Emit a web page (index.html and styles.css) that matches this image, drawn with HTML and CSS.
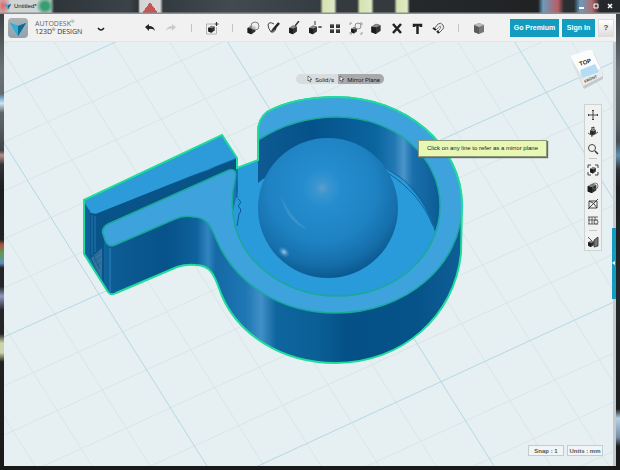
FILE: index.html
```
<!DOCTYPE html>
<html lang="en">
<head>
  <meta charset="UTF-8" />
  <meta name="viewport" content="width=device-width, initial-scale=1.0" />
  <title>Untitled*</title>
  <link rel="stylesheet" href="styles.css">
</head>
<body>
  <!-- shared icon shapes -->
  <svg class="defs" aria-hidden="true">
    <symbol id="cube" viewBox="0 0 14 14">
      <path d="M2 5l5-3 5 1.5v6L7 13l-5-2z" fill="#333"/>
      <path d="M2 5l5-3 5 1.5-5 2.5z" fill="#888"/>
      <path d="M2 5l5 1v7l-5-2z" fill="#1c1c1c"/>
    </symbol>
    <symbol id="cursor" viewBox="0 0 6 8">
      <path d="M1 1v5l1-1 1 2 1-.5-1-2h2z" fill="#fff" stroke="#333" stroke-width=".6"/>
    </symbol>
    <symbol id="logo" viewBox="0 0 20 20">
      <path d="M2 5l8 3 8-3-8 13z" fill="#1688b4"/>
      <path d="M2 5l8 3v10z" fill="#2fb2da"/>
      <path d="M10 8l8-3-8 13z" fill="#0c6c96"/>
    </symbol>
  </svg>

  <header class="titlebar">
    <svg class="title-logo"><use href="#logo"/></svg>
    <span class="title">Untitled*</span>
    <div class="window-buttons">
      <button aria-label="Minimize"><svg viewBox="0 0 8 8"><path d="M1 6h5" stroke="#fff" stroke-width="2"/></svg></button>
      <button aria-label="Maximize"><svg viewBox="0 0 8 8"><path d="M2 2h4v4H2z" fill="none" stroke="#fff" stroke-width="1"/></svg></button>
      <button aria-label="Close"><svg viewBox="0 0 8 8"><path d="M2 2l4 4M6 2L2 6" stroke="#fff" stroke-width="1.5"/></svg></button>
    </div>
  </header>

  <div class="window">
    <nav class="toolbar">
      <div class="brand">
        <svg class="brand-logo"><use href="#logo"/></svg>
        <div class="brand-name"><span>AUTODESK<sup>®</sup></span><strong>123D<sup>®</sup> DESIGN</strong></div>
        <button class="tool brand-menu" aria-label="Menu"><svg viewBox="0 0 14 14"><path d="M4 7q3 4 6 0" fill="none" stroke="#222" stroke-width="1.5"/></svg></button>
      </div>
      <div class="tools">
        <button class="tool" aria-label="Undo"><svg viewBox="0 0 14 14"><path d="M2 6l4-3v2q5 0 6 5-2-3-6-2v2z" fill="#222"/></svg></button>
        <button class="tool" aria-label="Redo"><svg viewBox="0 0 14 14"><path d="M12 6l-4-3v2q-5 0-6 5 2-3 6-2v2z" fill="#ccc"/></svg></button>
        <span class="sep"></span>
        <button class="tool" aria-label="Insert"><svg viewBox="0 0 14 14"><path d="M9 3H1.5v10h10V6" fill="none" stroke="#999" stroke-width=".7"/><use href="#cube" x="2" y="3.5" width="9" height="9"/><path d="M11.500 1v4M9.500 3h4" stroke="#333"/></svg></button>
        <span class="sep"></span>
        <button class="tool" aria-label="Primitives"><svg viewBox="0 0 14 14"><use href="#cube" x="0" y="3" width="11" height="11"/><circle cx="9" cy="5" r="4" fill="#eee" fill-opacity=".7" stroke="#666" stroke-width=".8"/></svg></button>
        <button class="tool" aria-label="Sketch"><svg viewBox="0 0 14 14"><path d="M8 3Q3 0 2 4q0 3 3 7 4 1 5-4" fill="none" stroke="#444"/><path d="M13 2L7 9" stroke="#222" stroke-width="2.5"/><path d="M5 11l1-3 2 2z" fill="#222"/></svg></button>
        <button class="tool" aria-label="Construct"><svg viewBox="0 0 14 14"><use href="#cube" x="0" y="3" width="12" height="11"/><path d="M8 5l4-5" stroke="#333" stroke-width="1.5"/></svg></button>
        <button class="tool" aria-label="Modify"><svg viewBox="0 0 14 14"><use href="#cube" x="-1" y="3" width="12" height="11"/><path d="M7 0v4M10 6h4M12 5v2" stroke="#333"/></svg></button>
        <button class="tool" aria-label="Pattern"><svg viewBox="0 0 14 14"><path d="M2 3h4v4H2zM8 3h4v4H8zM2 8h4v4H2zM8 8h4v4H8z" fill="#333"/><path d="M2 3l2 1 2-1M8 3l2 1 2-1M2 8l2 1 2-1M8 8l2 1 2-1" fill="none" stroke="#bbb" stroke-width=".7"/></svg></button>
        <button class="tool" aria-label="Grouping"><svg viewBox="0 0 14 14"><path d="M1 4V2h2M11 2h2v2M13 11v2h-2M3 13H1v-2" fill="none" stroke="#888" stroke-width=".8"/><use href="#cube" x="1" y="5" width="8" height="8"/><circle cx="9" cy="5" r="3" fill="#eee" stroke="#777" stroke-width=".8"/></svg></button>
        <button class="tool" aria-label="Combine"><svg viewBox="0 0 14 14"><use href="#cube" x="0" y="1" width="14" height="13"/></svg></button>
        <button class="tool" aria-label="Delete"><svg viewBox="0 0 14 14"><path d="M3 3l8 9M11 3l-8 9" stroke="#222" stroke-width="2.5"/></svg></button>
        <button class="tool" aria-label="Text"><svg viewBox="0 0 14 14"><path d="M4 6V4h7v2M7.500 4v9" fill="none" stroke="#222" stroke-width="2.5"/></svg></button>
        <button class="tool" aria-label="Snap"><svg viewBox="0 0 14 14"><path d="M3 8l4-5q3-2 5 1t-1 5l-3 3" fill="none" stroke="#666"/><path d="M5 9l4-4q2 0 0 3l-3 3" fill="none" stroke="#888"/><path d="M2 7l3 2M6 10l2 2" stroke="#222" stroke-width="2"/></svg></button>
        <span class="sep"></span>
        <button class="tool" aria-label="Material"><svg viewBox="0 0 14 14"><path d="M2 4l5-2 5 2v7l-5 2-5-2z" fill="#777"/><path d="M2 4l5 2v7l-5-2z" fill="#5b5b5b"/><path d="M2 4l5-2 5 2-5 2z" fill="#bbb"/></svg></button>
      </div>
      <div class="account">
        <button class="btn premium">Go Premium</button>
        <button class="btn signin">Sign In</button>
        <button class="btn help">?</button>
      </div>
    </nav>

    <main class="viewport">
      <svg class="scene" viewBox="4 42 612 424" preserveAspectRatio="xMidYMid slice" role="img" aria-label="Whistle model">
        <defs>
          <linearGradient id="side" gradientUnits="userSpaceOnUse" x1="83" y1="0" x2="462" y2="0">
            <stop offset="0" stop-color="#1a78b4"/>
            <stop offset=".08" stop-color="#0d5c93"/>
            <stop offset=".22" stop-color="#07528a"/>
            <stop offset=".3" stop-color="#0e629c"/>
            <stop offset=".33" stop-color="#3186c2"/>
            <stop offset=".35" stop-color="#1569a5"/>
            <stop offset=".43" stop-color="#1e77b3"/>
            <stop offset=".47" stop-color="#418fc8"/>
            <stop offset=".51" stop-color="#0f659e"/>
            <stop offset=".62" stop-color="#0a5f96"/>
            <stop offset=".7" stop-color="#045087"/>
            <stop offset=".88" stop-color="#065389"/>
            <stop offset="1" stop-color="#0e5f97"/>
          </linearGradient>
          <linearGradient id="wall" gradientUnits="userSpaceOnUse" x1="258" y1="0" x2="440" y2="0">
            <stop offset="0" stop-color="#0e5a92"/>
            <stop offset=".3" stop-color="#05528a"/>
            <stop offset=".65" stop-color="#0b659f"/>
            <stop offset=".75" stop-color="#2278b3"/>
            <stop offset=".8" stop-color="#4a94c9"/>
            <stop offset=".85" stop-color="#1970ac"/>
            <stop offset="1" stop-color="#0b5b95"/>
          </linearGradient>
          <radialGradient id="ball" gradientUnits="userSpaceOnUse" cx="322" cy="188" r="96">
            <stop offset="0" stop-color="#5a9fc9"/>
            <stop offset=".07" stop-color="#3a95d0"/>
            <stop offset=".2" stop-color="#258dce"/>
            <stop offset=".55" stop-color="#1f83c3"/>
            <stop offset=".8" stop-color="#156eaa"/>
            <stop offset="1" stop-color="#075084"/>
          </radialGradient>
          <radialGradient id="spark">
            <stop offset="0" stop-color="#a5d0ec"/>
            <stop offset="1" stop-color="#2c86c1" stop-opacity="0"/>
          </radialGradient>
        </defs>

        <!-- work plane grid -->
        <path class="grid" d="M-232 41l267 425M-175 41l267 425M-117 41l267 425M-3 41l267 425M54 41l267 425M112 41l267 425M169 41l267 425M284 41l267 425M342 41l267 425M399 41l267 425M457 41l267 425M571 41l267 425"/>
        <path class="grid" d="M4 44l612-280M4 142l612-280M4 191l612-280M4 239l612-280M4 288l612-280M4 386l612-280M4 435l612-280M4 484l612-280M4 533l612-280M4 632l612-280M4 681l612-280M4 730l612-280"/>
        <path class="grid major" d="M-60 41l267 425M227 41l267 425M514 41l267 425M4 93l612-280M4 337l612-276M4 583l612-282"/>

        <!-- whole body -->
        <path fill="url(#side)" d="M84 200L222 135 237 158 237 168 258 160V132Q258 119 267 112Q294 97 336 97C406 97 462 146 462 205L461 253C455 316 402 363 336 363C280 363 238 333 222 296C216 282 214 265 196 265Q186 264 177 267L116 293Q111 296 108 292L84 254Z"/>

        <!-- back rail -->
        <path d="M84 201L222 136 236 158 98 213Q93 215 89 211Z" fill="#2d9ad9"/>
        <path d="M236 159V170L104 226V282L90 258V213L96 214Z" fill="#085489"/>
        <path d="M84 203l6 8v48l-6-7z" fill="#0f6098"/>
        <path d="M92 215v40M95 216v36" stroke="#2f84bf" stroke-width=".7"/>
        <path d="M91 258l3-3 8-7v32z" fill="#2f739f"/>
        <path d="M94 257l6-5M94 262l7-6M97 266l4-4M93 255l7 14" stroke="#164f76" stroke-width=".6"/>

        <!-- chamber floor and inner wall -->
        <path d="M237 169L258 160 300 150 420 160Q445 200 439 225C430 268 389 296 337 296C280 296 237 257 232 215L238 190Z" fill="#299ada"/>
        <path d="M258 141C280 126 306 117 337 117C396 117 441 156 440 206Q440 220 435 231C426 203 410 184 388 170L330 150 263 179 258 183Z" fill="url(#wall)"/>
        <path d="M388 170C410 181 430 203 435 231M388 173C408 186 424 203 433 226" fill="none" stroke="#10649b" stroke-width="1"/>
        <path d="M237 168V198M238 199q5 3 0 7 5 4 1 8l-2 12" fill="none" stroke="#095a90" stroke-width="1"/>

        <!-- ball -->
        <circle cx="328" cy="208" r="70" fill="url(#ball)"/>
        <path d="M281 196Q286 222 308 230Q290 217 281 196Z" fill="#4c9dd0" opacity=".5"/>
        <ellipse cx="284" cy="252" rx="7" ry="5" fill="url(#spark)" transform="rotate(40 284 252)"/>

        <!-- top face -->
        <path class="edge" fill="#3ea2dc" d="M103 234Q101 228 108 224L229 170Q238 168 235 180C232 192 232 205 233 215C238 260 283 296 337 296C395 296 440 256 440 206C440 156 394 117 337 117C306 117 280 126 258 140V132Q258 119 267 112Q294 97 336 97C406 97 462 146 462 205C462 265 406 313 336 313C280 313 236 284 217 241C211 227 208 217 193 217Q184 215 175 219L115 245Q108 248 105 240Z"/>
        <path d="M110 248v44" stroke="#2c84bd" stroke-width="1"/>

        <!-- selection outline -->
        <path class="outline" d="M84 200L222 135 237 158 237 168 258 160V132Q258 119 267 112Q294 97 336 97C406 97 462 146 462 205L461 253C455 316 402 363 336 363C280 363 238 333 222 296C216 282 214 265 196 265Q186 264 177 267L116 293Q111 296 108 292L84 254Z"/>
      </svg>

      <div class="steps">
        <button class="step"><svg><use href="#cursor"/></svg>Solid/s</button>
        <button class="step active"><svg><use href="#cursor"/></svg>Mirror Plane</button>
      </div>

      <div class="tooltip" role="tooltip">Click on any line to refer as a mirror plane</div>

      <svg class="viewcube" viewBox="0 0 36 44" role="img" aria-label="View cube">
        <path d="M4 14l12 28 19-10V26L26 6z" fill="#b4babc" opacity=".7"/>
        <path d="M3 11Q2 9 5 8L20 3q4-1 5 2l8 17-21 7z" fill="#fbfcfc"/>
        <path d="M12 28l22-6 1 7-20 10z" fill="#e9eced"/>
        <path d="M3 11l10 17 2 11L5 19z" fill="#dde1e2"/>
        <path d="M12 23l15-6 4 8-17 6z" fill="#b5dcf5"/>
        <text x="12" y="19" font-size="6" font-weight="700" fill="#222" transform="rotate(-18 12 19)">TOP</text>
        <text x="17" y="36" font-size="4" font-weight="700" fill="#555" transform="rotate(-24 17 36)">FRONT</text>
      </svg>

      <aside class="navbar">
        <button aria-label="Pan"><svg viewBox="0 0 12 12"><path d="M6 1v10M1 6h10M5 2l1-1 1 1M5 10l1 1 1-1M2 5L1 6l1 1M10 5l1 1-1 1" fill="none" stroke="#333" stroke-width=".9"/></svg></button>
        <button aria-label="Orbit"><svg viewBox="0 0 12 12"><use href="#cube" x="2" y="2" width="8" height="8"/><path d="M7 1Q2 3 5 11M1 7q4 4 10-1M4 2l3-1v3" fill="none" stroke="#444" stroke-width=".9"/></svg></button>
        <button aria-label="Zoom"><svg viewBox="0 0 12 12"><circle cx="5" cy="5" r="3.5" fill="none" stroke="#444"/><path d="M8 8l3 3" stroke="#333" stroke-width="1.5"/></svg></button>
        <hr>
        <button aria-label="Fit"><svg viewBox="0 0 12 12"><path d="M1 4V1h3M8 1h3v3M11 8v3H8M4 11H1V8" fill="none" stroke="#444"/><use href="#cube" x="2" y="2" width="8" height="8"/></svg></button>
        <button aria-label="Display mode"><svg viewBox="0 0 12 12"><use href="#cube" x="-1" y="1" width="12" height="12"/><circle cx="8" cy="5" r="3" fill="none" stroke="#666" stroke-width=".8"/></svg></button>
        <button aria-label="Hide sketches"><svg viewBox="0 0 12 12"><path d="M2 3h8v7H2zM1 11L11 1M2 3q5 1 8 7" fill="none" stroke="#333" stroke-width=".9"/></svg></button>
        <button aria-label="Grid"><svg viewBox="0 0 12 12"><path d="M1 2h10M1 5h10M1 9h10M2 2v7M5 2v7M8 2v7" fill="none" stroke="#444" stroke-width=".8"/><circle cx="9" cy="7" r="2" fill="#eee" stroke="#444" stroke-width=".8"/></svg></button>
        <hr>
        <button aria-label="Snap"><svg viewBox="0 0 12 12"><use href="#cube" x="0" y="3" width="8" height="9"/><path d="M1 1l4 4M7 4l4-3v9L7 11z" fill="#777" stroke="#333" stroke-width=".8"/></svg></button>
      </aside>

      <div class="scrollbar"></div>
      <button class="panel-tab" aria-label="Open parts library"></button>

      <footer class="status">
        <button>Snap : 1</button>
        <button>Units : mm</button>
      </footer>
    </main>
  </div>
</body>
</html>
```
FILE: styles.css
```
* {
  box-sizing: border-box;
}
body {
  margin: 0;
  height: 100vh;
  padding: 0 4px 4px;
  display: flex;
  flex-direction: column;
  overflow: hidden;
  font-family: "Liberation Sans", Arial, sans-serif;
  background:
    linear-gradient(transparent 20%, #7fb2d6 21%, #cfe4f0 22%, transparent 24%, transparent 32%, #b98d86 33%, transparent 35%, transparent 51%, #a5533f 52%, #5f9a5c 54%, #5b8fc0 56%, transparent 57%, transparent 61%, #8f9ac0 63%, transparent 66%, transparent 71%, #cbd6a8 73%, #cbd6a8 75%, transparent 77%) left / 4px 100% no-repeat,
    linear-gradient(transparent 30%, #5f8fb0 33%, transparent 36%, transparent 87%, #b9cfe2 89%, #7790a8 93%, transparent 95%) right / 4px 100% no-repeat,
    linear-gradient(#30363a, #6b7276 15%, #5a6165 26%, #1c1e20 40%, #25282a 62%, #222 75%, #191919);
}
button {
  margin: 0;
  padding: 0;
  border: none;
  background: none;
  font-family: inherit;
  white-space: nowrap;
}
.defs {
  position: absolute;
  width: 0;
  height: 0;
}

/* title bar */
.titlebar {
  display: flex;
  align-items: center;
  flex: none;
  height: 14px;
  margin: 0 -4px;
  padding: 0 6px 2px 4px;
  background:
    linear-gradient(transparent 12px, #8b9194 13px),
    radial-gradient(ellipse 8px 12px at 3px 6px, #d66, transparent),
    radial-gradient(ellipse 9px 9px at 45px 6px, #3a9c72 40%, transparent),
    conic-gradient(from 145deg at 50% 0, #c25757 70deg, transparent 0) 142px 2px / 16px 11px no-repeat,
    linear-gradient(90deg, #cfd4d4 50px, #2f3539 54px, #3b4349 130px, #2d3337 138px, #d5d5d5 140px, #d8d8d8 160px, #343b40 163px, #434b50 230px, #353c42 320px, #d6e3b0 323px, #dfe8c5 334px, #343a3e 337px, #343a3e 357px, #d6e3b0 360px, #dfe8c5 371px, #343a3e 374px, #343a3e 394px, #d6e3b0 397px, #dfe8c5 407px, #26292c 410px, #202224 538px, #6a9cbc 543px, #b95d62 558px, #2b2e31 564px, #2b2e31 574px, #6a9cbc 580px, #b06a70 592px, #25282a 600px);
}
.title-logo {
  width: 8px;
  height: 8px;
}
.title {
  margin-left: 2px;
  font-size: 6px;
  color: #111;
}
.window-buttons {
  display: flex;
  gap: 6px;
  margin-left: auto;
}
.window-buttons button,
.window-buttons svg {
  display: block;
  width: 8px;
  height: 8px;
}

.window {
  flex: 1;
  display: flex;
  flex-direction: column;
  min-height: 0;
}

/* toolbar */
.toolbar {
  display: flex;
  align-items: center;
  flex: none;
  height: 28px;
  padding: 0 2px 0 4px;
  background: #f1f1f1;
  border-bottom: 1px solid #e2e6e6;
}
.brand {
  display: flex;
  align-items: center;
  width: 132px;
}
.brand-logo {
  width: 20px;
  height: 20px;
  border-radius: 4px;
  background: linear-gradient(#a9b2b6, #8fa4ae);
}
.brand-name {
  display: flex;
  flex-direction: column;
  width: 56px;
  margin-left: 7px;
  font-family: "Open Sans", sans-serif;
  font-size: 7px;
  line-height: 8px;
  color: #666;
}
.brand-name strong {
  font-weight: 500;
  color: #333;
}
.brand-name sup {
  font-size: 4px;
  line-height: 0;
}
.brand-menu {
  width: 20px;
}
.tools {
  display: flex;
  align-items: center;
  flex: 1;
}
.tool {
  display: flex;
  justify-content: center;
  cursor: pointer;
}
.tools .tool,
.sep {
  flex: 1;
}
.tool svg {
  width: 14px;
  height: 14px;
}
.sep {
  height: 8px;
  background: linear-gradient(#c4c4c4, #c4c4c4) center / 1px 100% no-repeat;
}
.account {
  display: flex;
  gap: 3px;
  margin-left: 21px;
}
.btn {
  height: 18px;
  font-size: 7px;
  font-weight: bold;
  color: #fff;
  background: #129cc0;
}
.premium {
  width: 49px;
}
.signin {
  width: 33px;
}
.help {
  width: 16px;
  font-size: 8px;
  color: #444;
  background: linear-gradient(#fff, #ddd);
  border: 1px solid #ddd;
}

/* 3d view */
.viewport {
  position: relative;
  flex: 1;
  min-height: 0;
  overflow: hidden;
  background: #e6eff1;
}
.scene {
  display: block;
  width: 100%;
  height: 100%;
}
.grid {
  fill: none;
  stroke: #dae5e8;
  stroke-width: 1;
}
.major {
  stroke: #b4d8e5;
}
.outline {
  fill: none;
  stroke: #1fdc9c;
  stroke-width: 2;
}
.edge {
  stroke: #18a99b;
  stroke-width: 1.5;
}

.steps {
  position: absolute;
  top: 32px;
  left: 50%;
  display: flex;
  width: 88px;
  height: 10px;
  margin-left: -14px;
  border-radius: 5px;
  overflow: hidden;
  background: #d9dcdd;
}
.step {
  display: flex;
  align-items: center;
  justify-content: flex-end;
  flex: none;
  width: 42px;
  padding-right: 4px;
  font-family: Roboto, sans-serif;
  font-size: 6px;
  color: #222;
}
.step svg {
  width: 6px;
  height: 8px;
  margin-right: 2px;
}
.step.active {
  width: 46px;
  background: #a9a9ac;
}

.tooltip {
  position: absolute;
  top: 98px;
  left: 414px;
  padding: 0 8px;
  font-size: 6px;
  line-height: 15px;
  white-space: nowrap;
  color: #222;
  background: #e9f7b4;
  border: 1px solid #8c9a77;
  box-shadow: 1px 1px 1px #667;
}
.viewcube {
  position: absolute;
  top: 5px;
  right: 12px;
  width: 36px;
  height: 44px;
}

.navbar {
  position: absolute;
  top: 62px;
  right: 14px;
  display: flex;
  flex-direction: column;
  align-items: center;
  width: 18px;
  padding: 1px 0 0;
  background: #f0f2f2;
  border: 1px solid #cdd2d3;
}
.navbar button {
  display: flex;
  align-items: center;
  height: 17px;
}
.navbar svg {
  width: 12px;
  height: 12px;
}
.navbar hr {
  width: 8px;
  margin: 1px 0 2px;
  border: none;
  border-top: 1px solid #c4c8c9;
}

.scrollbar {
  position: absolute;
  top: 0;
  right: 0;
  bottom: 0;
  width: 3px;
  background: #c3cbce;
}
.panel-tab {
  position: absolute;
  top: 186px;
  right: 0;
  width: 4px;
  height: 71px;
  background: #129cc0;
}
.panel-tab::before {
  content: "";
  position: absolute;
  top: 33px;
  left: 0;
  border: 2px solid transparent;
  border-left: none;
  border-right: 3px solid #fff;
}
.status {
  position: absolute;
  right: 13px;
  bottom: 10px;
  display: flex;
  gap: 3px;
}
.status button {
  height: 11px;
  width: 36px;
  font-size: 6px;
  font-weight: bold;
  color: #555;
  background: #f2f5f5;
  border: 1px solid #c5cccd;
}
```
